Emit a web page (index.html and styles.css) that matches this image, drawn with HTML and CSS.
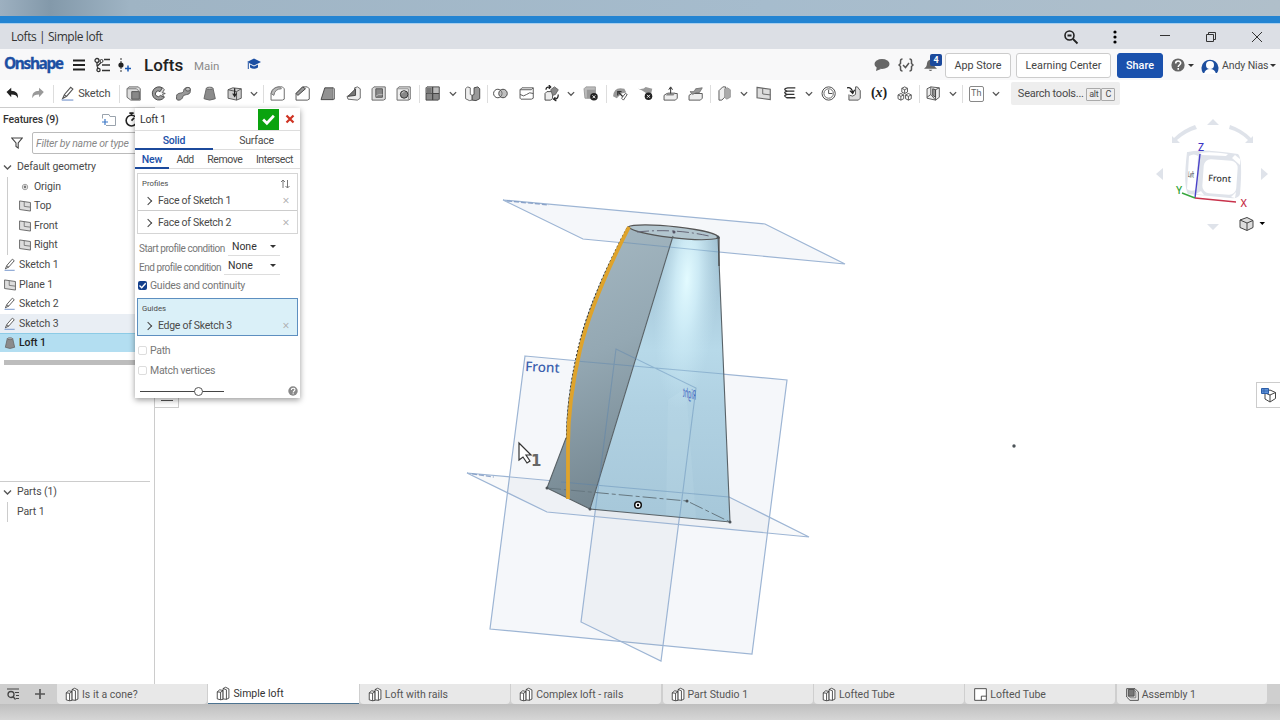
FILE: index.html
```
<!DOCTYPE html>
<html lang="en">

<head>
    <meta charset="UTF-8" />
    <meta name="viewport" content="width=device-width, initial-scale=1.0" />
    <title>Lofts | Simple loft</title>
    <link rel="stylesheet" href="styles.css">
</head>

<body>
    <!-- icon sprite -->
    <svg class="sprite">
        <symbol id="undo" viewBox="0 0 18 18"><path d="M2.500 7.500l5-4.500v3c5 0 8 3 7 8-1-3-3-4-7-4v3z" fill="currentColor" /></symbol>
        <symbol id="redo" viewBox="0 0 18 18"><path d="M15.500 7.500l-5-4.500v3c-5 0-8 3-7 8 1-3 3-4 7-4v3z" fill="currentColor" /></symbol>
        <symbol id="pencil" viewBox="0 0 18 18"><path d="M3 14l2-4.500 7-8 2.500 2-7 8zM5 10l2.500 2" fill="#fff" stroke="#555" stroke-width="1.200" /><path d="M2 15.800h13" stroke="#6d8fc9" stroke-width="1.200" /></symbol>
        <symbol id="extrude" viewBox="0 0 18 18"><path d="M2 4l2-2h10l2 2v12H6l-4-3z" fill="#ddd" stroke="#666" /><path d="M7 7h8v8H7z" fill="#888" stroke="#555" /><path d="M2 4h10l3 3" fill="none" stroke="#777" /></symbol>
        <symbol id="revolve" viewBox="0 0 18 18"><path d="M13 3A7 7 0 1 0 15 13l-4-2a3 3 0 1 1-.5-4z" fill="#999" stroke="#444" /><path d="M10.500 7L13 3l2 2-2 3 3 1-3 1 2 3" fill="#ddd" stroke="#555" /></symbol>
        <symbol id="sweep" viewBox="0 0 18 18"><path d="M1.500 15v-3c0-5 7.500-2 7.500-6 0-3 5-4.500 7-2v3c0 4.500-8 2-8 6-1 3-5 4-6.500 2z" fill="#999" stroke="#555" /><ellipse cx="13.500" cy="4.500" rx="2.500" ry="2" fill="#bbb" stroke="#555" /></symbol>
        <symbol id="loft" viewBox="0 0 18 18"><path d="M5.500 3.500L3 14.500q6 3 12 0L12.500 3.500z" fill="#8b8b8b" stroke="#666" /><ellipse cx="9" cy="3.500" rx="3.500" ry="1.200" fill="#bbb" stroke="#666" /></symbol>
        <symbol id="thicken" viewBox="0 0 18 18"><path d="M2 5l5-2 9 1v10l-5 2-9-2z" fill="#ccc" stroke="#555" /><path d="M2 5l9 2v9M11 7l5-3" fill="none" stroke="#555" /><path d="M9 3.500V11M7 9l2 3 2-3" fill="none" stroke="#222" stroke-width="1.300" /></symbol>
        <symbol id="fillet" viewBox="0 0 18 18"><path d="M2 16V9q1-6 8-7h4l2 2v11l-2 1z" fill="#fff" stroke="#666" /><path d="M2 9q2-7 9-7l2 2q-7 0-8 7z" fill="#bbb" stroke="#777" /></symbol>
        <symbol id="chamfer" viewBox="0 0 18 18"><path d="M2 16V9l7-7h5l2 2v11l-2 1z" fill="#fff" stroke="#555" /><path d="M2 9l7-7 3 2-8 7z" fill="#999" stroke="#444" /></symbol>
        <symbol id="draft" viewBox="0 0 18 18"><path d="M2 15.500L6 3h9v12.500z" fill="#929292" stroke="#444" /><path d="M15 3l1 1v11h-1" fill="#fff" stroke="#444" /></symbol>
        <symbol id="rib" viewBox="0 0 18 18"><path d="M2 12l8-2V3l3-1 3 2v10l-3 2-10-1z" fill="#eee" stroke="#666" /><path d="M3 12l8-8v7z" fill="#777" stroke="#444" /></symbol>
        <symbol id="shell" viewBox="0 0 18 18"><path d="M2 4l2-2h12v13l-2 1H2z" fill="#ddd" stroke="#666" /><path d="M6 4h7v9H6z" fill="#888" stroke="#555" /><path d="M6 12l3-2h4" fill="none" stroke="#bbb" /></symbol>
        <symbol id="hole" viewBox="0 0 18 18"><path d="M2 4l2-2h12v13l-2 1H2z" fill="#eee" stroke="#666" /><path d="M2 4h12v12" fill="none" stroke="#888" /><circle cx="9.500" cy="10" r="4" fill="#888" stroke="#333" /><path d="M7 9a3 3 0 0 1 3-2" stroke="#ccc" fill="none" /></symbol>
        <symbol id="pattern" viewBox="0 0 18 18"><path d="M2 3l1-1h6v7H2zM9 2h7v7H9z" fill="#bbb" stroke="#444" /><path d="M2 9h7v7H2zM9 9h7v6l-1 1H9z" fill="#888" stroke="#444" /><path d="M3 3h5v6H3z" fill="#777" /></symbol>
        <symbol id="mirror" viewBox="0 0 18 18"><path d="M1.500 4l2-2 3 1v7l2 1v5l-3 .5-4-2z" fill="#eee" stroke="#666" /><path d="M16.500 4l-2-2-4 1v7l-2 1v5l4 .5 4-2z" fill="#999" stroke="#444" /></symbol>
        <symbol id="boolean" viewBox="0 0 18 18"><circle cx="6" cy="9" r="4.500" fill="none" stroke="#444" /><circle cx="11.500" cy="9" r="4.500" fill="#8888" stroke="#444" /></symbol>
        <symbol id="split" viewBox="0 0 18 18"><path d="M2 5l2-2h12v11l-2 1H3l-1-1z" fill="#fff" stroke="#555" /><path d="M2 5h12l2-2M2 10q4 3 7 0t7-1" fill="none" stroke="#555" /></symbol>
        <symbol id="transform" viewBox="0 0 18 18"><path d="M2 9l2-2h6v7l-2 2H2z" fill="#eee" stroke="#444" /><path d="M8 5l4-3 4 3-3 5-3 1z" fill="#888" stroke="#666" /><path d="M3 5q0-3 4-3M6 0l2 2-2 2M16 10q0 5-4 5M13 13l-2 2 3 2" fill="none" stroke="#222" stroke-width="1.300" /></symbol>
        <symbol id="delete" viewBox="0 0 18 18"><path d="M2 4l2-2h10v9l-2 3H3z" fill="#bbb" stroke="#999" /><path d="M5 5h9v9H5z" fill="#999" /><circle cx="12.500" cy="12.500" r="4" fill="#222" /><path d="M11 11l3 3m0-3l-3 3" stroke="#fff" /></symbol>
        <symbol id="modify" viewBox="0 0 18 18"><path d="M2 12Q3 1 14 4l2 4-5 1-5 5z" fill="#999" /><path d="M8 8l5 5M7 11V7h4" fill="none" stroke="#333" stroke-width="1.300" /><path d="M11 14l4-5 2 1-4 6z" fill="#fff" stroke="#555" /></symbol>
        <symbol id="delface" viewBox="0 0 18 18"><path d="M1 4q6 1 8-2l7 2-2 9q-5-6-13-9z" fill="#999" /><circle cx="12" cy="12" r="4" fill="#222" /><path d="M10.500 10.500l3 3m0-3l-3 3" stroke="#fff" /></symbol>
        <symbol id="moveface" viewBox="0 0 18 18"><path d="M2 11l3-2h11v5l-2 2H2z" fill="#eee" stroke="#555" /><path d="M4 11l2-3h8l-2 3z" fill="#888" /><path d="M9 9V3M7 5l2-3 2 3" fill="none" stroke="#222" /></symbol>
        <symbol id="replace" viewBox="0 0 18 18"><path d="M2 11l3-2h11v5l-2 2H2z" fill="#eee" stroke="#555" /><path d="M3 7q5 1 6-3l7-1-3 5q-5-1-7 2z" fill="#999" stroke="#777" /></symbol>
        <symbol id="offset" viewBox="0 0 18 18"><path d="M3 6l4-4h3v10l-4 4H3z" fill="#eee" stroke="#555" /><path d="M9 4l3-1 3 2v8l-4 2-2-2z" fill="#aaa" stroke="#999" /></symbol>
        <symbol id="plane" viewBox="0 0 18 18"><path d="M2 2.500l14 2v11l-14-2z" fill="#ddd" stroke="#666" stroke-width="1.200" /><path d="M8 3.500v6l8 1" fill="none" stroke="#666" /></symbol>
        <symbol id="helix" viewBox="0 0 18 18"><path d="M15 3H7q-6 1-1 3.500h8M14 6.500H7q-6 1-1 3.500h8M14 10H7q-6 1-1 3.500h9" fill="none" stroke="#333" stroke-width="1.400" /></symbol>
        <symbol id="clock" viewBox="0 0 18 18"><circle cx="9" cy="9" r="7" fill="#fff" stroke="#444" /><circle cx="9" cy="9" r="5" fill="none" stroke="#666" /><path d="M9 5v4h4" fill="none" stroke="#444" /></symbol>
        <symbol id="derive" viewBox="0 0 18 18"><path d="M4 10v6h10l2-2V6l-3-4h-2v8q-3 3-6 1" fill="#ddd" stroke="#555" /><path d="M2 3q5-1 6 5M5 6l3 3 2-4" fill="none" stroke="#222" stroke-width="1.300" /></symbol>
        <symbol id="cubes" viewBox="0 0 18 18"><path d="M9 2l3 1.500v4L9 9 6 7.500v-4zM6 3.500L9 5l3-1.500M9 5v4M5 9l3 1.500v4L5 16l-3-1.500v-4zM2 10.500L5 12l3-1.500M5 12v4M13 9l3 1.500v4L13 16l-3-1.500v-4zM10 10.500l3 1.500 3-1.500M13 12v4" fill="none" stroke="#555" /></symbol>
        <symbol id="frame" viewBox="0 0 18 18"><path d="M2 4l4-2 9 1v10l-4 3-9-2z" fill="#eee" stroke="#555" /><path d="M2 13l4-3V2M6 10l5 6V5l4-2" fill="none" stroke="#555" /><path d="M8 4l3 1v8l-3-2z" fill="#999" stroke="#444" /></symbol>
        <symbol id="studio" viewBox="0 0 18 18"><path d="M1.500 7l3-2.500 4 1V16l-3 .5-4-1zM1.500 7l4 .5v9M5.500 7.500l3-2" fill="#fff" stroke="#333" /><path d="M8.500 3l3-1.500 4 2V14.500l-3 1.500-4-.5zM8.500 3l4 1.500V16" fill="#fff" stroke="#333" /></symbol>
        <symbol id="drawing" viewBox="0 0 18 18"><path d="M2 2h14v14H2z" fill="#fff" stroke="#333" /><path d="M10 16v-5h6" fill="none" stroke="#333" /></symbol>
        <symbol id="assembly" viewBox="0 0 18 18"><path d="M2 2h10l4 4v10H6l-4-4z" fill="#eee" stroke="#333" /><path d="M4 3h7v8H4z" fill="#777" stroke="#444" /><path d="M11 3l2 3v7H7l-3-2" fill="none" stroke="#666" /></symbol>
        <symbol id="down" viewBox="0 0 10 10"><path d="M1.500 3.500L5 7l3.500-3.500" fill="none" stroke="#555" stroke-width="1.400" /></symbol>
        <symbol id="help" viewBox="0 0 18 18"><circle cx="9" cy="9" r="8.500" fill="currentColor" /><path d="M6 7c0-4 6.500-4 6.500-.5C12.500 9 9.300 9 9.300 11.500M9.300 13v2" fill="none" stroke="#fff" stroke-width="2" /></symbol>
    </svg>

    <div class="desktop"></div>

    <div class="titlebar">
        <span>Lofts | Simple loft</span>
        <div class="window-buttons">
            <svg viewBox="0 0 16 16"><circle cx="6.500" cy="6.500" r="4.500" fill="none" stroke="#222" stroke-width="1.600" /><path d="M4.500 6.500h4M10 10l4.500 4.500" stroke="#222" stroke-width="1.800" /></svg>
            <svg class="dots" viewBox="0 0 16 16"><circle cx="8" cy="3" r="1.600" /><circle cx="8" cy="8" r="1.600" /><circle cx="8" cy="13" r="1.600" /></svg>
            <svg viewBox="0 0 16 16"><path d="M3 6.500h10" stroke="#333" /></svg>
            <svg viewBox="0 0 16 16"><path d="M3.500 5.500h7v7h-7zM5.500 5.500v-2h7v7h-2" fill="none" stroke="#333" /></svg>
            <svg viewBox="0 0 16 16"><path d="M3 3l10 10M13 3L3 13" stroke="#333" /></svg>
        </div>
    </div>

    <header>
        <span class="logo">Onshape</span>
        <svg class="burger" viewBox="0 0 12 12"><path d="M0 1.500h12M0 6h12M0 10.500h12" stroke="#222" stroke-width="1.800" /></svg>
        <svg class="versions" viewBox="0 0 16 16"><circle cx="3" cy="3.500" r="2" fill="none" stroke="#333" stroke-width="1.300" /><circle cx="7.500" cy="4" r="1.500" fill="none" stroke="#333" /><circle cx="4.500" cy="13" r="1.600" fill="none" stroke="#333" stroke-width="1.300" /><path d="M3 5.500v3l1 3M7 5.500l-4 4M10 2.500h6M8 8h8M8 13.500h8" fill="none" stroke="#333" stroke-width="1.300" /></svg>
        <svg class="insert" viewBox="0 0 14 16"><path d="M3 1v14" stroke="#333" stroke-dasharray="2 1" /><circle cx="3" cy="8" r="2.600" fill="#222" /><path d="M7 11.500h6M10 8.500v6" stroke="#1b5ab5" stroke-width="1.500" /></svg>
        <h1>Lofts</h1>
        <span class="branch">Main</span>
        <svg class="grad" viewBox="0 0 14 12"><path d="M0 4l7-3.500L14 4 7 7.500z" fill="#1c4fa3" /><path d="M3 6.500v3q4 2.500 8 0v-3l-4 2z" fill="#1c4fa3" /><path d="M1.300 5v6" stroke="#1c4fa3" /></svg>
        <div class="account">
            <svg class="chat" viewBox="0 0 16 14"><ellipse cx="8" cy="6" rx="7.500" ry="5" fill="#666" /><path d="M3 8l-1 5 5-2z" fill="#666" /></svg>
            <svg class="braces" viewBox="0 0 16 14"><path d="M4.500 1Q2.500 1 2.500 3v2.500L1 7l1.500 1.500V11q0 2 2 2M11.500 1q2 0 2 2v2.500L15 7l-1.500 1.500V11q0 2-2 2M5 7l2.500 2.500L11 5" fill="none" stroke="#555" stroke-width="1.500" /></svg>
            <div class="bell">
                <svg viewBox="0 0 14 14"><path d="M7 1q-4 1-4 6 0 2-3 4h14q-3-2-3-4 0-5-4-6M5 12h4q-2 3-4 0" fill="#666" /></svg>
                <span class="badge">4</span>
            </div>
            <button class="store">App Store</button>
            <button class="learning">Learning Center</button>
            <button class="share">Share</button>
            <svg class="help"><use href="#help" /></svg>
            <i class="caret"></i>
            <svg class="avatar" viewBox="0 0 18 17"><path d="M2 16A8.500 8.500 0 1 1 16 16z" fill="#1d4f9f" /><circle cx="9" cy="8" r="4" fill="#fff" /><path d="M3 17q1-5 6-5t6 5z" fill="#fff" /></svg>
            <span class="user">Andy Nias</span>
            <i class="caret"></i>
        </div>
    </header>

    <nav class="toolbar">
        <svg class="tool"><use href="#undo" /></svg>
        <svg class="tool off"><use href="#redo" /></svg>
        <i class="sep"></i>
        <span class="sketch"><svg><use href="#pencil" /></svg>Sketch</span>
        <i class="sep"></i>
        <svg class="tool"><use href="#extrude" /></svg>
        <svg class="tool"><use href="#revolve" /></svg>
        <svg class="tool"><use href="#sweep" /></svg>
        <svg class="tool"><use href="#loft" /></svg>
        <svg class="tool"><use href="#thicken" /></svg>
        <svg class="more"><use href="#down" /></svg>
        <i class="sep"></i>
        <svg class="tool"><use href="#fillet" /></svg>
        <svg class="tool"><use href="#chamfer" /></svg>
        <svg class="tool"><use href="#draft" /></svg>
        <svg class="tool"><use href="#rib" /></svg>
        <svg class="tool"><use href="#shell" /></svg>
        <svg class="tool"><use href="#hole" /></svg>
        <i class="sep"></i>
        <svg class="tool"><use href="#pattern" /></svg>
        <svg class="more"><use href="#down" /></svg>
        <svg class="tool"><use href="#mirror" /></svg>
        <i class="sep"></i>
        <svg class="tool"><use href="#boolean" /></svg>
        <svg class="tool"><use href="#split" /></svg>
        <svg class="tool"><use href="#transform" /></svg>
        <svg class="more"><use href="#down" /></svg>
        <svg class="tool"><use href="#delete" /></svg>
        <i class="sep"></i>
        <svg class="tool"><use href="#modify" /></svg>
        <svg class="tool"><use href="#delface" /></svg>
        <svg class="tool"><use href="#moveface" /></svg>
        <svg class="tool"><use href="#replace" /></svg>
        <i class="sep"></i>
        <svg class="tool"><use href="#offset" /></svg>
        <svg class="more"><use href="#down" /></svg>
        <svg class="tool"><use href="#plane" /></svg>
        <svg class="tool"><use href="#helix" /></svg>
        <svg class="more"><use href="#down" /></svg>
        <svg class="tool"><use href="#clock" /></svg>
        <svg class="tool"><use href="#derive" /></svg>
        <span class="tool variable">(<i>x</i>)</span>
        <svg class="tool"><use href="#cubes" /></svg>
        <i class="sep"></i>
        <svg class="tool"><use href="#frame" /></svg>
        <svg class="more"><use href="#down" /></svg>
        <i class="sep"></i>
        <span class="tool"><span class="thread">Th</span></span>
        <svg class="more"><use href="#down" /></svg>
        <span class="search">Search tools... <kbd>alt</kbd><kbd>C</kbd></span>
    </nav>

    <main>
        <aside>
            <div class="features-head">
                <b>Features (9)</b>
                <svg class="folder" viewBox="0 0 14 12"><path d="M4 11.500h9.500v-9H8L7 .5H.5v4" fill="none" stroke="#9aa3ad" /><path d="M0 8h6M3 5v6" stroke="#3c78c8" stroke-width="1.200" /></svg>
                <svg class="timer" viewBox="0 0 14 14"><circle cx="7" cy="8" r="5" fill="none" stroke="#222" stroke-width="1.500" /><path d="M5 1h4M7 1v2M7 8l2.500-2.500" stroke="#222" stroke-width="1.500" /></svg>
            </div>
            <div class="filter">
                <svg viewBox="0 0 12 12"><path d="M.8 1h10.400L7.200 6v5L5 9.500V6z" fill="none" stroke="#444" stroke-width="1.100" /></svg>
                <input type="text" placeholder="Filter by name or type">
            </div>
            <ul class="features">
                <li class="group"><svg class="twist"><use href="#down" /></svg>Default geometry
                    <ul>
                        <li><svg viewBox="0 0 18 18"><circle cx="9" cy="9" r="3.500" fill="none" stroke="#999" stroke-width="1.200" /><circle cx="9" cy="9" r="1.800" fill="#777" /></svg>Origin</li>
                        <li><svg><use href="#plane" /></svg>Top</li>
                        <li><svg><use href="#plane" /></svg>Front</li>
                        <li><svg><use href="#plane" /></svg>Right</li>
                    </ul>
                </li>
                <li><svg><use href="#pencil" /></svg>Sketch 1</li>
                <li><svg><use href="#plane" /></svg>Plane 1</li>
                <li><svg><use href="#pencil" /></svg>Sketch 2</li>
                <li class="hover"><svg><use href="#pencil" /></svg>Sketch 3</li>
                <li class="selected"><svg><use href="#loft" /></svg>Loft 1</li>
            </ul>
            <div class="rollback"></div>
            <div class="parts">
                <div class="parts-head"><svg class="twist"><use href="#down" /></svg>Parts (1)</div>
                <div class="part">Part 1</div>
            </div>
        </aside>

        <div class="viewport">
            <svg class="scene" viewBox="155 107 1125 577">
                <defs>
                    <linearGradient id="side" x1="0" y1="0" x2=".2" y2="1">
                        <stop offset="0" stop-color="#a6b9c3" />
                        <stop offset=".5" stop-color="#94a8b3" />
                        <stop offset="1" stop-color="#768892" />
                    </linearGradient>
                    <linearGradient id="face" x1="0" y1="0" x2="0" y2="1">
                        <stop offset="0" stop-color="#9dbdcf" />
                        <stop offset=".4" stop-color="#b7d9e9" />
                        <stop offset=".6" stop-color="#b0d1e2" />
                        <stop offset="1" stop-color="#a6c7d9" />
                    </linearGradient>
                    <radialGradient id="shine" gradientUnits="userSpaceOnUse" cx="0" cy="0" r="1" gradientTransform="translate(687 280) rotate(4) scale(32 130)">
                        <stop offset="0" stop-color="#e3fbff" />
                        <stop offset=".35" stop-color="#d6f3fc" stop-opacity=".8" />
                        <stop offset="1" stop-color="#c5e5f2" stop-opacity="0" />
                    </radialGradient>
                    <clipPath id="faceclip"><path d="M673 236l45 0 12 286-140-13z" /></clipPath>
                </defs>
                <!-- planes behind the part -->
                <g stroke="#9db5d4" stroke-width="1.200">
                    <path d="M503 200l262 24 80 40-262-25z" fill="#5f7fb510" />
                    <path d="M525 356l262 24-35 274-262-25z" fill="#5f7fb510" />
                    <path d="M616 349l80 39-35 273-80-39z" fill="#6f83950e" />
                    <path d="M467 473l262 24 80 40-262-25z" fill="#6f83950c" />
                </g>
                <!-- loft body -->
                <path d="M628 227L673 236 590 509 547 488 566 438C566 400 573 370 579 345 587 308 608 262 628 227z" fill="url(#side)" />
                <path d="M673 236l45 0 12 286-140-13z" fill="url(#face)" />
                <path d="M640 160h100v260h-120z" fill="url(#shine)" clip-path="url(#faceclip)" />
                <path d="M668 400l-2 115 30 3-10-130z" fill="#d7edf5" opacity=".12" />
                <path d="M628 227C637 221 718 229 719 238 700 243 638 235 628 227z" fill="#b3c6cf" stroke="#555" stroke-width="1.100" />
                <path d="M637 232q36-4 72 4" fill="none" stroke="#667" stroke-dasharray="12 3 2 3" />
                <circle cx="674" cy="232" r="1.500" fill="#556" />
                <path d="M673 236L590 509 730 522 718 237M566 438L547 488 590 509" fill="none" stroke="#596267" stroke-width="1.100" />
                <path d="M719 237v29" stroke="#444" stroke-width="1.200" />
                <path d="M547 488l140 13 43 21" fill="none" stroke="#667780" stroke-dasharray="14 3 4 3" />
                <!-- plane edges seen through the part -->
                <path d="M619 242l100 10M576 361l148 13M595.500 509L616 349l80 39-16.500 130M561 482l168 15" fill="none" stroke="#527fae" stroke-opacity=".4" stroke-width="1.100" />
                <path d="M627 228C606 268 587 310 578 349S567 415 566.500 440" fill="none" stroke="#333" stroke-width="1.300" stroke-dasharray="2 2" />
                <path d="M629 227C608 268 589 312 580 350S568 425 568 447V499" fill="none" stroke="#dfa32b" stroke-width="3.800" />
                <g fill="#4c5358">
                    <circle cx="547" cy="488" r="1.500" />
                    <circle cx="590" cy="509" r="1.500" />
                    <circle cx="687" cy="501" r="1.500" />
                    <circle cx="730" cy="522" r="1.500" />
                    <circle cx="718" cy="237" r="1.500" />
                    <circle cx="1014" cy="446" r="1.700" />
                </g>
                <circle cx="638" cy="505" r="3.300" fill="#fff" stroke="#111" stroke-width="1.500" />
                <circle cx="638" cy="505" r="1.200" />
                <path d="M507 201l42 4M472 474l22 3" stroke="#6786b8" stroke-width="1.200" stroke-opacity=".7" stroke-dasharray="5 2" />
                <text class="plane-name" x="525" y="371" transform="rotate(3 525 371)">Front</text>
                <text class="plane-back" transform="translate(696 400) skewY(15) scale(-.44 1.1)">Right</text>
                <!-- mouse pointer -->
                <path d="M519 443v17l4-3 4 6 3-2-4-6h5z" fill="#fff" stroke="#333" stroke-width="1.200" />
                <text class="pointer-no" x="531" y="466">1</text>

                <!-- view cube -->
                <g fill="#dfe3ea">
                    <path d="M1207 125l6-6 6 6zM1207 224h12l-6 6zM1156 174l7-6v12zM1268 174l-7-6v12z" />
                    <path d="M1172 143v-7l2 2q9-9 21-13l2 4q-11 3-20 11l3 3zM1253 143v-7l-2 2q-9-9-21-13l-1 4q11 3 19 11l-3 3z" />
                    <path d="M1188 152q12-4 50 2 5 4 2 40-1 5-10 4l-42-4q-5-8-1-42z" />
                </g>
                <rect x="1203" y="160" width="34" height="34" rx="7" fill="#fff" transform="rotate(4 1220 177)" />
                <path d="M1189 156q5-3 9 0l-2 34q-6 2-9-1z" fill="#fff" />
                <path d="M1200 153q10-2 28 1l-2 2-24-1zM1232 158l3-3 5 4v6zM1196 194l5-3 3 4zM1231 197l5-5-1 6z" fill="#fff" />
                <path d="M1195 198l5-44" stroke="#4a42c8" stroke-width="1.400" />
                <path d="M1195 198l41 4" stroke="#c8324b" stroke-width="1.400" />
                <path d="M1195 198l-13-5" stroke="#37a63e" stroke-width="1.400" />
                <g class="cube-text">
                    <text x="1198" y="151" fill="#3d35c4">Z</text>
                    <text x="1240.500" y="206.500" fill="#c8324b">X</text>
                    <text x="1176" y="194" fill="#2ea336">Y</text>
                    <text class="cube-front" x="1208" y="181" transform="rotate(3 1208 181)">Front</text>
                    <text class="cube-left" transform="translate(1188 177) rotate(5) scale(.35 .9)">Left</text>
                </g>
                <path d="M1240 220l7-2.500 6 3v7l-6 3-7-3z" fill="#ddd" stroke="#444" /><path d="M1240 220l7 3 6-2.500M1247 223v7" fill="none" stroke="#444" />
                <path d="M1259.500 222h5.500l-2.700 3z" />
            </svg>
            <div class="list-button"></div>
            <div class="table-button"><svg viewBox="0 0 16 16"><path d="M4 5l5-2 5.500 2.500v6L9 15l-5-3zM4 6l5 2 5.500-2.500M9 8v7" fill="#fff" stroke="#444" /><path d="M.5 1.500h7v5h-7z" fill="#5f91d8" stroke="#2d5fa8" /><path d="M.5 4h7M3 1.500v5" stroke="#2d5fa8" stroke-width=".7" /></svg></div>
        </div>

        <form class="dialog">
            <div class="dialog-title">
                <span>Loft 1</span>
                <span class="accept"><svg viewBox="0 0 14 12"><path d="M2 6l3.500 3.500L12 2.500" fill="none" stroke="#fff" stroke-width="2.500" /></svg></span>
                <svg class="cancel" viewBox="0 0 10 10"><path d="M1.500 1.500l7 7M8.500 1.500l-7 7" stroke="#cf3322" stroke-width="2.200" /></svg>
            </div>
            <div class="kind"><span class="on">Solid</span><span>Surface</span></div>
            <div class="operation"><span class="on">New</span><span>Add</span><span>Remove</span><span>Intersect</span></div>
            <div class="profiles">
                <div class="box-label">Profiles <svg viewBox="0 0 10 10"><path d="M3 9V1M1 3l2-2 2 2M7.500 1v8M5.500 7l2 2 2-2" fill="none" stroke="#777" /></svg></div>
                <div class="entity"><i class="arrow"></i>Face of Sketch 1<i class="remove"></i></div>
                <div class="entity second"><i class="arrow"></i>Face of Sketch 2<i class="remove"></i></div>
            </div>
            <div class="condition"><label>Start profile condition</label><span class="select start">None<i class="caret"></i></span></div>
            <div class="condition"><label>End profile condition</label><span class="select">None<i class="caret"></i></span></div>
            <div class="check"><i class="box checked"><svg viewBox="0 0 9 9"><path d="M1.500 4.500l2.200 2.200 4-4.500" fill="none" stroke="#fff" stroke-width="1.400" /></svg></i>Guides and continuity</div>
            <div class="guides">
                <div class="box-label">Guides</div>
                <div class="entity"><i class="arrow"></i>Edge of Sketch 3<i class="remove"></i></div>
            </div>
            <div class="check path"><i class="box"></i>Path</div>
            <div class="check match"><i class="box"></i>Match vertices</div>
            <div class="opacity">
                <div class="slider"><i></i></div>
                <svg><use href="#help" /></svg>
            </div>
        </form>
    </main>

    <footer>
        <div class="tab-tools">
            <svg viewBox="0 0 14 14"><path d="M1 2h12M9 5.500h4M10 8.500h3M10 11.500h3" stroke="#444" stroke-width="1.200" /><circle cx="5" cy="7.500" r="3" fill="none" stroke="#444" stroke-width="1.300" /><path d="M7 9.500l2.500 3" stroke="#444" stroke-width="1.300" /></svg>
            <svg viewBox="0 0 14 14"><path d="M2 7h10M7 2v10" stroke="#555" stroke-width="1.700" /></svg>
        </div>
        <div class="tab"><svg><use href="#studio" /></svg>Is it a cone?</div>
        <div class="tab active"><svg><use href="#studio" /></svg>Simple loft</div>
        <div class="tab"><svg><use href="#studio" /></svg>Loft with rails</div>
        <div class="tab"><svg><use href="#studio" /></svg>Complex loft - rails</div>
        <div class="tab"><svg><use href="#studio" /></svg>Part Studio 1</div>
        <div class="tab"><svg><use href="#studio" /></svg>Lofted Tube</div>
        <div class="tab"><svg><use href="#drawing" /></svg>Lofted Tube</div>
        <div class="tab"><svg><use href="#assembly" /></svg>Assembly 1</div>
    </footer>
    <div class="shadow"></div>
</body>

</html>
```
FILE: styles.css
```
* {
    box-sizing: border-box;
}

body {
    margin: 0;
    width: 1280px;
    height: 720px;
    overflow: hidden;
    display: flex;
    flex-direction: column;
    font-family: Roboto, "Open Sans", sans-serif;
    font-size: 10.5px;
    color: #4a4a4a;
    background-color: white;
}

svg {
    flex: none;
}

.sprite {
    position: absolute;
    width: 0;
    height: 0;
}

.desktop {
    height: 23px;
    flex: none;
    background-image: linear-gradient(90deg, #9db0c0 0, #8399aa 50px, #9fb4c4 130px, #a6bccd 60%, #b0bfca);
    border-bottom: 7px solid #2384d2;
}

.titlebar {
    height: 26px;
    flex: none;
    display: flex;
    align-items: center;
    justify-content: space-between;
    padding-left: 11px;
    background-color: #dcdfe5;
    border-top: 1px solid #a8cfee;
    font-family: "Open Sans", sans-serif;
    font-size: 12px;
    letter-spacing: -0.43px;
    color: #333;
}

.window-buttons {
    display: flex;
    gap: 30px;
    padding-right: 15px;
}

.window-buttons svg {
    width: 16px;
    height: 16px;
}

.window-buttons .dots {
    margin: 0 4px 0 -2px;
}

header {
    height: 31px;
    flex: none;
    display: flex;
    align-items: center;
    padding-top: 1px;
    background-color: #f8f8f9;
}

.logo {
    width: 67px;
    padding: 0 0 4px 4px;
    font: bold 15.5px "Noto Sans", sans-serif;
    letter-spacing: -1.4px;
    -webkit-text-stroke: 0.3px #1c4fa3;
    color: #1c4fa3;
}

.burger {
    width: 12px;
    height: 12px;
    margin: 0 9px 0 6px;
}

.versions {
    width: 16px;
    height: 16px;
    margin-right: 8px;
}

.insert {
    width: 14px;
    height: 16px;
}

h1 {
    width: 50px;
    margin: 0 0 0 12px;
    font-size: 17px;
    font-weight: 500;
    color: #222;
}

.branch {
    width: 54px;
    padding-top: 2px;
    font-size: 11.5px;
    color: #8a8a8a;
}

.grad {
    width: 14px;
    height: 12px;
    margin: 0 0 3px -1px;
}

.account {
    flex: 1;
    display: flex;
    align-items: center;
    justify-content: flex-end;
    padding-right: 4px;
}

.chat {
    width: 16px;
    height: 14px;
    margin-right: 8px;
}

.braces {
    width: 16px;
    height: 14px;
    margin-right: 10px;
}

.bell {
    position: relative;
    width: 21px;
    height: 14px;
}

.bell svg {
    width: 13px;
    height: 14px;
}

.badge {
    position: absolute;
    left: 6px;
    top: -4px;
    width: 12px;
    height: 12px;
    border-radius: 2px;
    background-color: #1c4a9c;
    color: white;
    font-weight: bold;
    font-size: 9px;
    line-height: 12px;
    text-align: center;
}

button {
    height: 25px;
    padding: 0;
    border: 1px solid #ccc;
    border-radius: 3px;
    background-color: white;
    color: #444;
    font-family: inherit;
    font-size: 10.8px;
}

.store {
    width: 66px;
}

.learning {
    width: 95px;
    margin: 0 6px 0 5px;
}

.share {
    width: 46px;
    margin-right: 8px;
    border-color: #1a51ad;
    background-color: #1a51ad;
    color: white;
    font-weight: 500;
}

.help {
    width: 14px;
    height: 14px;
    margin-right: 3px;
    color: #666;
}

.caret {
    display: inline-block;
    border: 3px solid transparent;
    border-top-color: #333;
    border-bottom: 0;
}

.avatar {
    width: 18px;
    height: 17px;
    margin: 0 3px 0 7px;
}

.user {
    width: 48px;
    white-space: nowrap;
    letter-spacing: -0.1px;
}

.toolbar {
    height: 27px;
    flex: none;
    display: flex;
    align-items: center;
    font-size: 11px;
}

.tool {
    width: 25.3px;
    height: 17px;
    flex: none;
    color: #222;
    text-align: center;
}

.off {
    color: #999;
}

.more {
    width: 14px;
    height: 9px;
}

.sep {
    width: 3.6px;
    height: 18px;
    flex: none;
    background-image: linear-gradient(#ddd, #ddd);
    background-size: 1px 100%;
    background-position: 2px 0;
    background-repeat: no-repeat;
}

.sketch {
    width: 63px;
    display: flex;
    align-items: center;
    padding-left: 6px;
    letter-spacing: -0.2px;
}

.sketch svg {
    width: 16px;
    height: 16px;
    margin-right: 2px;
}

.variable {
    font: bold 14px/15px "Liberation Serif", serif;
}

.thread {
    display: block;
    width: 15px;
    height: 16px;
    margin: 1px auto 0;
    border: 1px solid #888;
    border-radius: 2px;
    font-size: 9px;
    line-height: 13px;
    color: #666;
}

.search {
    width: 109px;
    height: 23px;
    margin-left: 8px;
    padding-left: 7px;
    line-height: 23px;
    background-color: #eee;
    border-radius: 2px;
    letter-spacing: -0.25px;
    white-space: nowrap;
}

kbd {
    display: inline-block;
    height: 13px;
    padding: 0 2px;
    border: 1px solid #aaa;
    border-radius: 1px;
    font: 9px/11px Roboto, sans-serif;
}

kbd + kbd {
    padding: 0 3px;
}

main {
    position: relative;
    height: 577px;
    flex: none;
    display: flex;
}

aside {
    width: 155px;
    flex: none;
    border-top: 1px solid #ccc;
    border-right: 1px solid #ccc;
    letter-spacing: -0.1px;
}

.features-head {
    height: 23px;
    display: flex;
    align-items: center;
    padding-left: 3px;
    color: #333;
}

.features-head b {
    width: 99px;
    font-weight: 500;
}

.folder {
    width: 14px;
    height: 12px;
}

.timer {
    width: 15px;
    height: 15px;
    margin-left: 8px;
}

.filter {
    height: 26px;
    display: flex;
    align-items: center;
    padding: 0 0 2px 11px;
}

.filter svg {
    width: 12px;
    height: 12px;
    margin-right: 9px;
}

.filter input {
    width: 118px;
    height: 22px;
    padding: 0 3px;
    border: 1px solid #bbb;
    border-radius: 2px;
    font: italic 10.5px Roboto, sans-serif;
    letter-spacing: -0.22px;
}

.filter input::placeholder {
    color: #888;
}

ul {
    margin: 0;
    padding: 0;
    list-style: none;
}

.features {
    line-height: 19.6px;
}

.features li {
    padding-left: 3px;
}

.features svg {
    width: 14px;
    height: 14px;
    margin-right: 2px;
    vertical-align: -4px;
}

.features .group {
    padding-left: 2px;
}

.features .twist,
.twist {
    width: 11px;
    height: 10px;
    margin-right: 4px;
    vertical-align: -2px;
}

.group ul {
    margin-left: 5px;
    padding-left: 7px;
    border-left: 1px solid #ccc;
}

.features .hover {
    background-color: #e9eef4;
}

.features .selected {
    background-color: #b3def1;
    border-top: 1px solid #8ccbe6;
    line-height: 18px;
    font-weight: 500;
    color: #222;
}

.rollback {
    height: 5px;
    margin: 8px 4px 0;
    background-color: #bdbdbd;
}

.parts {
    width: 150px;
    margin-top: 116px;
    border-top: 1px solid #ccc;
    line-height: 19.8px;
}

.parts-head {
    padding-left: 2px;
}

.part {
    margin-left: 7px;
    padding-left: 9px;
    border-left: 1px solid #ccc;
}

.viewport {
    position: relative;
    flex: 1;
}

.scene {
    display: block;
    width: 1125px;
    height: 577px;
}

.plane-name {
    font: 500 13.5px "Noto Sans", sans-serif;
    fill: #3b5fae;
}

.plane-back {
    font: 12px "Noto Sans", sans-serif;
    fill: #3b5fc0;
}

.pointer-no {
    font: bold 15px "DejaVu Sans", sans-serif;
    fill: #666;
}

.cube-text {
    font: 500 10.5px "Noto Sans", sans-serif;
}

.cube-front,
.cube-left {
    font-size: 9px;
    fill: #333;
}

.list-button {
    position: absolute;
    left: 0;
    top: 280px;
    width: 24px;
    height: 21px;
    border: 1px solid #ccc;
    border-left: 0;
}

.list-button::after {
    content: "";
    display: block;
    width: 12px;
    margin: 12px 0 0 6px;
    border-top: 1px solid #555;
}

.table-button {
    position: absolute;
    right: 0;
    top: 275px;
    width: 24px;
    height: 26px;
    padding: 4px 0 0 4px;
    border: 1px solid #ccc;
    border-right: 0;
}

.table-button svg {
    width: 16px;
    height: 16px;
}

.dialog {
    position: absolute;
    left: 135px;
    top: 1px;
    width: 165px;
    height: 290px;
    background-color: white;
    box-shadow: 0 2px 6px rgba(0, 0, 0, 0.4);
    letter-spacing: -0.28px;
}

.dialog-title {
    height: 23px;
    display: flex;
    align-items: center;
    padding-left: 5px;
    border-bottom: 1px solid #ddd;
    color: #333;
    letter-spacing: -0.2px;
}

.dialog-title span:first-child {
    width: 118px;
}

.accept {
    width: 21px;
    height: 21px;
    padding: 4px 3px;
    background-color: #0aa30e;
}

.accept svg {
    display: block;
    width: 15px;
    height: 13px;
}

.cancel {
    width: 10px;
    height: 10px;
    margin-left: 6px;
}

.kind,
.operation {
    height: 19px;
    display: flex;
    border-bottom: 1px solid #ddd;
    text-align: center;
    line-height: 19px;
    letter-spacing: -0.2px;
}

.kind span {
    width: 87px;
}

.kind .on {
    width: 78px;
    height: 19px;
}

.on {
    border-bottom: 2px solid #1c4a9c;
    color: #1b4fa8;
    font-weight: 500;
}

.operation {
    justify-content: space-between;
    padding-right: 7px;
    letter-spacing: -0.45px;
}

.operation .on {
    width: 34px;
    height: 19px;
    margin-right: -6px;
    letter-spacing: -0.2px;
}

.profiles,
.guides {
    margin: 4px 2px 0;
    border: 1px solid #d5d5d5;
}

.box-label {
    display: flex;
    justify-content: space-between;
    height: 17px;
    padding: 5px 7px 0 4px;
    font-size: 7.8px;
    line-height: 9px;
    letter-spacing: 0;
}

.box-label svg {
    width: 10px;
    height: 10px;
}

.entity {
    height: 19px;
    display: flex;
    align-items: center;
}

.second {
    height: 23px;
    padding-top: 1px;
    border-top: 1px solid #ccc;
}

.arrow {
    width: 6px;
    height: 6px;
    margin: 0 7px 0 7px;
    border: solid #444;
    border-width: 1.5px 1.5px 0 0;
    transform: rotate(45deg);
}

.remove {
    margin-left: auto;
    margin-right: 8px;
}

.remove::before {
    content: "×";
    font: 12px "Open Sans", sans-serif;
    color: #aaa;
}

.condition {
    height: 19px;
    display: flex;
    align-items: flex-end;
    padding-left: 4px;
    color: #777;
}

.condition label {
    font-size: 10px;
    letter-spacing: -0.45px;
    line-height: 15px;
}

.profiles + .condition {
    margin-top: 3px;
}

.select {
    width: 56px;
    height: 18px;
    padding: 2px 4px 0 4px;
    margin-left: 3px;
    border-bottom: 1px solid #ddd;
    color: #333;
    letter-spacing: 0;
}

.start {
    width: 52px;
}

.select .caret {
    float: right;
    margin-top: 5px;
}

.check {
    height: 20px;
    display: flex;
    align-items: center;
    padding-left: 3px;
    color: #777;
}

.box {
    width: 9px;
    height: 9px;
    margin-right: 3px;
    border: 1px solid #ddd;
    border-radius: 2px;
}

.checked {
    border: 0;
    background-color: #123f8c;
}

.checked svg {
    display: block;
    width: 9px;
    height: 9px;
}

.guides {
    height: 38px;
    margin-top: 3px;
    border-color: #5d8fc0;
    background-color: #daf0f8;
}

.path {
    margin-top: 4px;
}

.opacity {
    display: flex;
    align-items: center;
    height: 22px;
    padding: 0 2px 0 5px;
    justify-content: space-between;
}

.opacity svg {
    width: 10px;
    height: 10px;
    color: #888;
}

.slider {
    width: 84px;
    border-top: 1px solid #444;
}

.slider i {
    display: block;
    width: 9px;
    height: 9px;
    margin: -5px 0 -4px 54px;
    border: 1px solid #555;
    border-radius: 50%;
    background-color: white;
}

footer {
    height: 20px;
    flex: none;
    display: flex;
    background-color: #cfcfcf;
}

.tab-tools {
    width: 57px;
    display: flex;
    align-items: center;
    gap: 13px;
    padding-left: 6px;
}

.tab-tools svg {
    width: 14px;
    height: 14px;
}

.tab {
    width: 150.2px;
    height: 20px;
    margin-right: 1.2px;
    display: flex;
    align-items: center;
    padding-left: 8px;
    border-radius: 0 0 4px 4px;
    background-color: #e8e8e8;
    color: #555;
}

.tab svg {
    width: 15px;
    height: 15px;
    margin-right: 2px;
}

.active {
    background-color: white;
    border-bottom: 1px solid #4d7390;
    border-radius: 0;
    color: #333;
}

.shadow {
    flex: 1;
    background-image: linear-gradient(#bfbfbf, #d6d6d6);
}
```
